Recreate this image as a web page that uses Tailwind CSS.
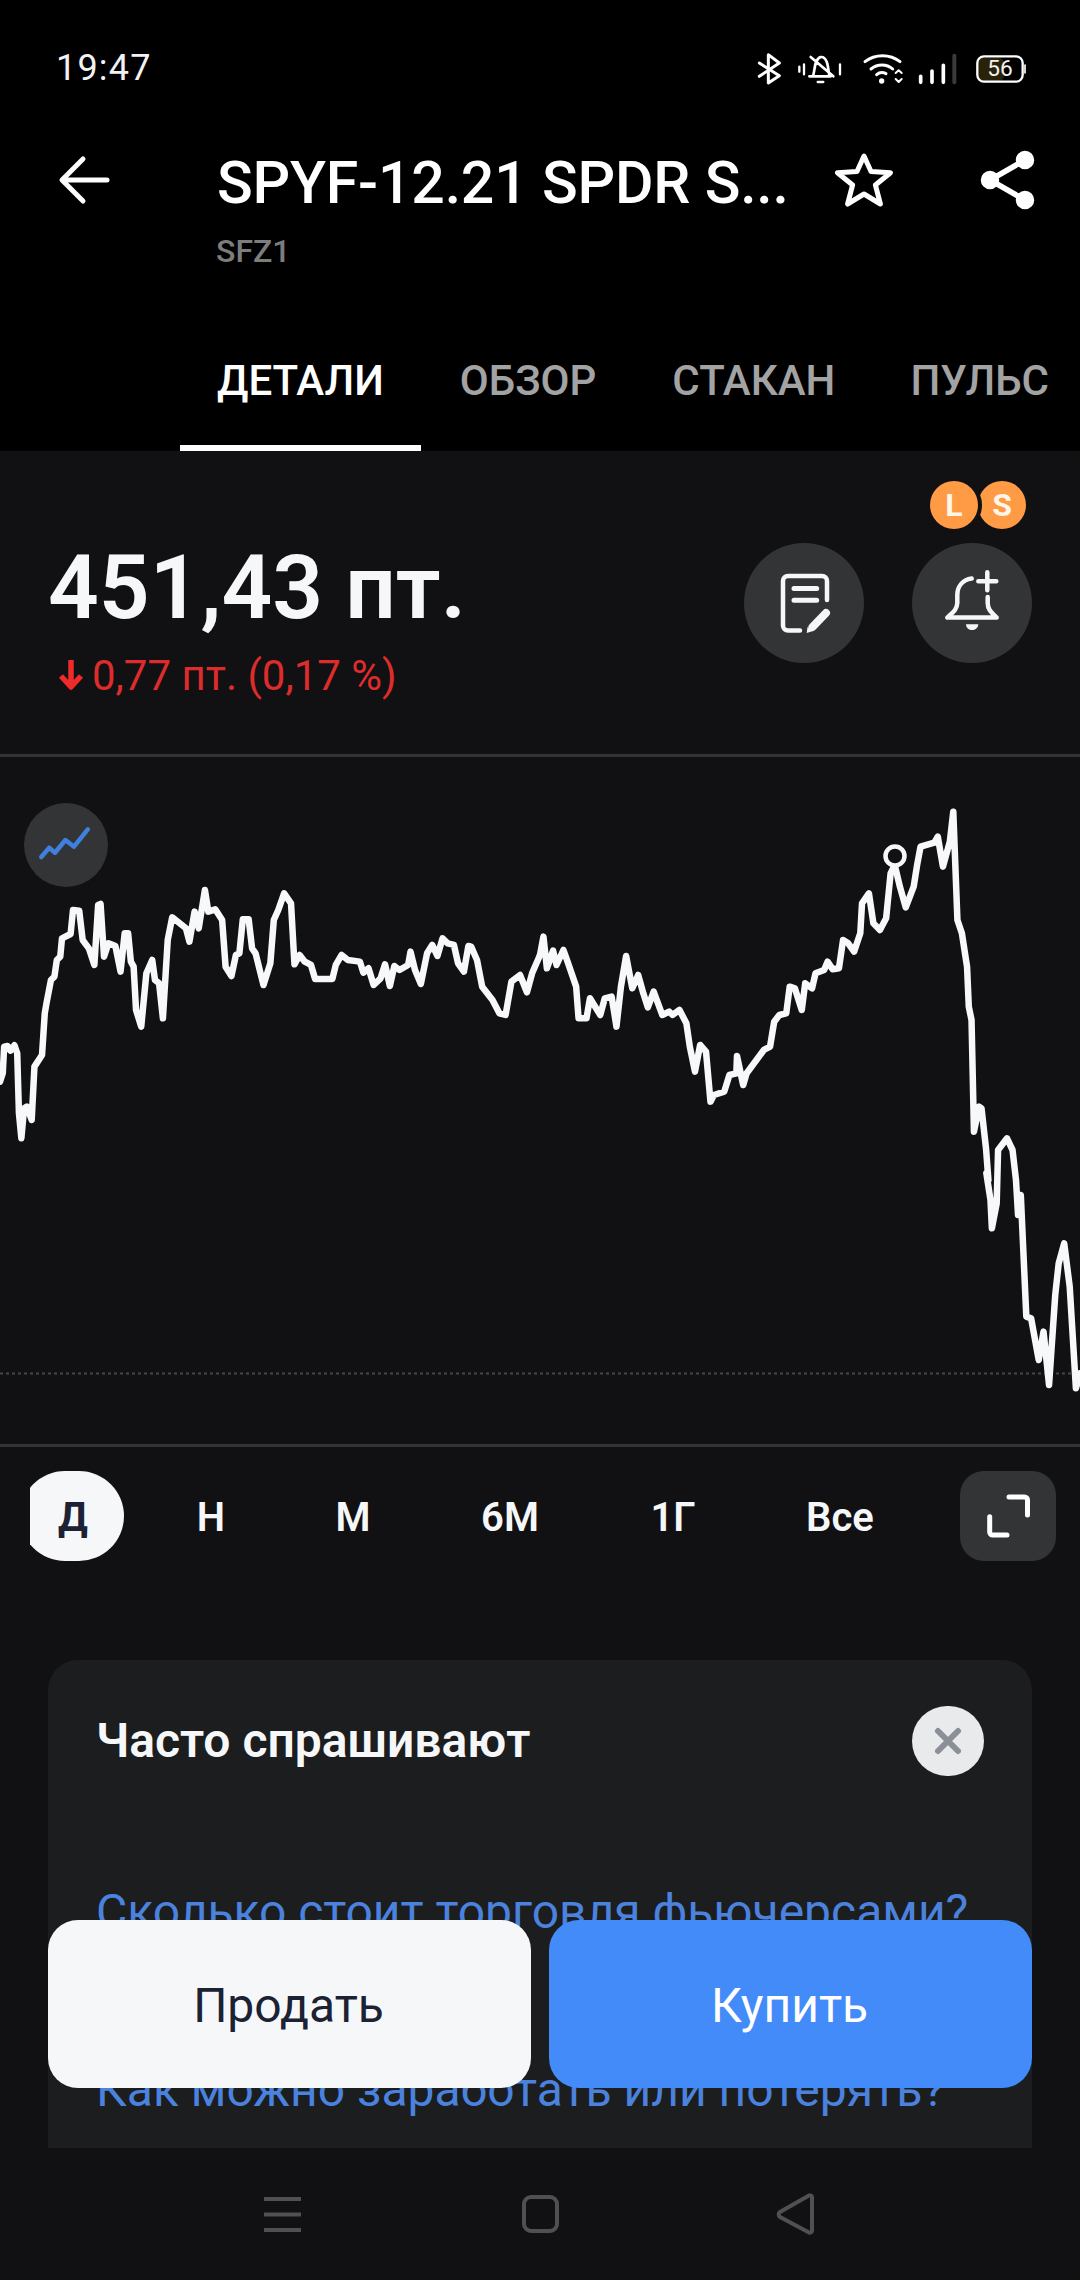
<!DOCTYPE html>
<html lang="ru">
<head>
<meta charset="utf-8">
<script src="https://cdn.jsdelivr.net/npm/@tailwindcss/browser@4"></script>
</head>
<body>
<div class="relative w-[1080px] h-[2280px] overflow-hidden bg-[#111113] font-[Roboto,sans-serif] text-white flex flex-col">

  <!-- header -->
  <header class="bg-black h-[451px] flex flex-col shrink-0">
    <div class="h-[136px] flex items-center justify-between pl-[56px] pr-[54px]">
      <span class="text-[36px] leading-[44px] tracking-[1.2px] text-[#f2f2f2]">19:47</span>
      <svg class="mr-[-54px]" width="380" height="70" viewBox="0 0 1140 210" fill="none" stroke="#fff" stroke-linecap="round" stroke-linejoin="round">
        <path d="M178 90L238 128L205 150V65L238 90L178 130" stroke-width="9"/>
        <path d="M298 101V116M312 94V124M420 94V124" stroke-width="7"/>
        <path d="M328 130H392M338 130C346 118 340 80 362 72C382 70 384 100 388 130M332 72L400 130" stroke-width="8"/>
        <path d="M353 147H370" stroke-width="7"/>
        <path d="M495 86C525 62 570 62 600 86M513 108C532 92 560 92 578 108M530 125C538 118 550 118 558 122" stroke-width="9"/>
        <circle cx="545" cy="144" r="8" fill="#fff" stroke="none"/>
        <path d="M587 120L596 112L605 120M587 138L596 147L605 138" stroke-width="6"/>
        <path d="M662 130V148M696 114V148M730 97V148" stroke-width="11"/>
        <path d="M763 68V148" stroke-width="12" stroke="#3a3a3a"/>
        <rect x="836" y="74" width="76" height="70" rx="16" fill="#2a2208" stroke="none"/>
        <rect x="832" y="70" width="136" height="76" rx="20" stroke-width="7"/>
        <path d="M975 96V120" stroke-width="5"/>
        <text x="900" y="130" text-anchor="middle" font-family="Roboto" font-size="68" fill="#f2f2f2" stroke="none">56</text>
      </svg>
    </div>
    <div class="h-[88px] flex items-center pl-[58px]">
      <svg width="54" height="52" viewBox="58 154 54 52" fill="none" stroke="#fff" stroke-width="5" stroke-linecap="round" stroke-linejoin="round"><path d="M107 180H63M83 159L62 180L83 201"/></svg>
      <h1 class="ml-[105px] mt-[6px] w-[617px] text-[59px] leading-[70px] font-medium tracking-[-0.2px] whitespace-nowrap">SPYF-12.21 SPDR S...</h1>
      <svg width="60" height="60" viewBox="834 150 60 60" fill="none" stroke="#fff" stroke-width="5" stroke-linejoin="round"><polygon points="864,156 871,171.5 890.5,172.7 875.4,185 880.4,204 864,194 847.6,204 852.6,185 837.5,172.7 857,171.5"/></svg>
      <svg class="ml-[84px]" width="60" height="64" viewBox="978 148 60 64" fill="#fff" stroke="#fff" stroke-width="5.5"><path d="M1025 160L990 180L1025 200" fill="none"/><circle cx="1025" cy="160" r="6.5"/><circle cx="990" cy="180" r="6.5"/><circle cx="1025" cy="200" r="6.5"/></svg>
    </div>
    <div class="h-[36px] mt-[9px] pl-[216px] text-[32px] leading-[36px] font-medium text-[#7d7d7d]">SFZ1</div>
    <nav class="mt-auto h-[126px] flex pl-[180px] text-[42px] font-medium text-[#a3a3a3]">
      <span class="px-[37px] pt-[31px] leading-[50px] text-white border-b-[6px] border-white">ДЕТАЛИ</span>
      <span class="pl-[39px] pr-[38px] pt-[31px] leading-[50px]">ОБЗОР</span>
      <span class="pl-[38px] pr-[37px] pt-[31px] leading-[50px]">СТАКАН</span>
      <span class="pl-[38px] pt-[31px] leading-[50px]">ПУЛЬС</span>
    </nav>
  </header>

  <!-- price -->
  <section class="h-[306px] shrink-0 border-b-[3px] border-[#333436] flex justify-between pt-[87px] pl-[48px] pr-[48px]">
    <div>
      <div class="text-[89px] leading-[100px] font-semibold text-[#f6f7f8]">451,43 пт.</div>
      <div class="flex items-center h-[50px] mt-[12px] text-[42px] text-[#dd2c2c] pl-[10px]">
        <svg width="26" height="32" viewBox="0 0 26 32" fill="none" stroke="#ee2a2a" stroke-width="5.5" stroke-linejoin="round"><path d="M13 1V28M3 17L13 28L23 17"/></svg>
        <span class="ml-[8px]">0,77 пт. (0,17 %)</span>
      </div>
    </div>
    <div class="flex gap-[48px] mt-[5px] h-[120px]">
      <div class="w-[120px] h-[120px] rounded-full bg-[#333436]">
        <svg width="120" height="120" viewBox="0 0 120 120" fill="none" stroke="#f6f7f8" stroke-width="4.5" stroke-linecap="round" stroke-linejoin="round">
          <path d="M56 87.5H44a5 5 0 0 1-5-5V38a5 5 0 0 1 5-5H78a5 5 0 0 1 5 5V57"/>
          <path d="M50 45.6H72.7M50 57.3H72.7" stroke-width="5"/>
          <path d="M82 70L68.5 84" stroke-width="8" stroke-linecap="round"/>
          <polygon points="62.7,90 63.5,84 69,88" fill="#f6f7f8" stroke="none"/>
        </svg>
      </div>
      <div class="relative w-[120px] h-[120px] rounded-full bg-[#333436]">
        <svg width="120" height="120" viewBox="0 0 120 120" fill="none" stroke="#f6f7f8" stroke-width="4.5" stroke-linecap="round" stroke-linejoin="round">
          <path d="M59.7 35.6C50 37 45.3 44 45.3 52.3V60C45 67 40 70 35.3 74.6H84.7C80 70 75.7 67 75.7 60V54"/>
          <path d="M75.3 29.3V47.3M66.3 38.3H84.3"/>
          <path d="M54 81.3H66.3C66 89 54 89 54 81.3Z" fill="#f6f7f8" stroke="none"/>
        </svg>
        <div class="absolute left-[18px] top-[-62px] flex">
          <span class="relative z-10 w-[48px] h-[48px] rounded-full bg-[#ff9a45] ring-4 ring-[#111113] flex items-center justify-center text-[32px] font-bold text-[#fff6ea]">L</span>
          <span class="w-[48px] h-[48px] rounded-full bg-[#ff9a45] flex items-center justify-center text-[32px] font-bold text-[#fff6ea]">S</span>
        </div>
      </div>
    </div>
  </section>

  <!-- chart -->
  <section class="relative h-[690px] shrink-0 border-b-[3px] border-[#333436]">
    <svg class="absolute inset-0" width="1080" height="687" viewBox="0 757 1080 687" fill="none">
      <path d="M0 1373.5H1080" stroke="#454648" stroke-width="2" stroke-dasharray="3 3"/>
      <g stroke="#f6f8fa" stroke-width="6.5" stroke-linejoin="round" stroke-linecap="round">
        <polyline vector-effect="non-scaling-stroke" transform="translate(0,780) scale(0.3444,0.3333)" points="0,905 8,880 12,800 22,798 30,812 42,796 50,820 55,1000 62,1075 70,985 78,980 92,1020 100,860 122,825 130,700 135,670 148,600 158,590 165,540 175,530 180,475 205,462 212,390 230,392 240,480 258,505 274,555 285,375 292,372 302,530 315,490 335,498 350,575 362,460 372,460 380,545 388,560 395,690 410,740 425,580 442,540 450,600 462,610 473,715 487,480 500,412 540,445 550,485 565,395 577,445 595,330 605,395 625,388 645,420 655,560 672,588 685,525 695,520 705,418 722,418 732,505 742,520 765,615 785,550 795,420 808,390 825,340 845,370 855,553 870,525 885,545 903,555 915,597 965,597 975,555 992,525 1010,540 1045,545 1055,578 1070,565 1085,615 1105,595 1118,553 1132,618 1145,558 1160,570 1185,555 1192,515 1205,570 1222,612 1240,520 1255,495 1270,528 1285,475 1300,490 1318,495 1330,550 1347,575 1360,498 1368,500 1385,540 1400,620 1430,660 1450,700 1468,705 1485,605 1510,585 1530,637 1545,580 1568,525"/>
        <polyline vector-effect="non-scaling-stroke" transform="translate(540,780) scale(0.3444,0.3333)" points="0,525 10,470 20,565 38,512 48,555 68,510 80,545 95,590 105,620 112,715 135,715 145,655 175,705 188,655 208,650 222,740 235,620 250,528 268,625 285,585 300,640 313,682 330,635 355,705 375,695 385,705 405,690 425,730 435,800 450,875 465,795 482,815 495,965 505,945 535,935 550,885 570,880 572,828 590,915 600,880 650,810 668,800 680,725 695,705 715,700 725,620 740,625 760,690 770,610 790,625 800,580 825,570 835,545 850,568 868,565 880,480 895,490 912,515 930,460 935,370 955,340 968,430 987,450 1005,415 1018,280 1030,255 1045,320 1062,382 1085,320 1095,255 1105,200 1145,188 1155,170 1170,260 1190,185 1200,95 1212,420 1225,460 1240,560 1245,680 1253,720 1260,1055 1275,980 1282,985 1295,1105 1302,1200"/>
        <polyline vector-effect="non-scaling-stroke" transform="translate(0,1180) scale(0.6888,0.3333)" points="1432,-20 1438,60 1440,145 1447,70 1449,-90 1462,-125 1470,-90 1475,0 1478,105 1482,45 1490,410 1497,415 1508,540 1515,455 1523,615 1532,345 1537,250 1545,190 1553,320 1562,625 1568,580"/>
      </g>
      <circle cx="895" cy="856" r="9.5" fill="#111113" stroke="#f6f8fa" stroke-width="4.5"/>
    </svg>
    <div class="absolute left-[24px] top-[46px] w-[84px] h-[84px] rounded-full bg-[#333436]">
      <svg width="84" height="84" viewBox="0 0 84 84" fill="none" stroke="#3f7fdd" stroke-width="4.5" stroke-linecap="round" stroke-linejoin="round"><polyline points="17.3,54 25.2,44.7 31,49.7 41.4,37 50,43.7 63.8,26.3"/></svg>
    </div>
  </section>

  <!-- periods -->
  <div class="h-[113px] shrink-0 pt-[24px] pl-[30px] flex text-[40px] font-semibold text-[#f6f7f8] leading-[94px] text-center">
    <div class="w-[94px] h-[90px] overflow-hidden">
      <div class="ml-[-10px] w-[104px] h-[90px] rounded-full bg-[#f6f7f9] text-[#1a2233] font-bold pl-[2px]">Д</div>
    </div>
    <span class="w-[174px]">Н</span>
    <span class="w-[110px]">М</span>
    <span class="w-[204px]">6М</span>
    <span class="w-[122px]">1Г</span>
    <span class="w-[212px]">Все</span>
    <div class="ml-[14px] w-[96px] h-[90px] rounded-[24px] bg-[#333436]">
      <svg width="96" height="90" viewBox="0 0 96 90" fill="none" stroke="#fff" stroke-width="5" stroke-linecap="round" stroke-linejoin="round"><path d="M49 26H64.5a3 3 0 0 1 3 3V44M29.7 45.7V61a3 3 0 0 0 3 3H47"/></svg>
    </div>
  </div>

  <!-- card -->
  <section class="mx-[48px] mt-[100px] h-[488px] shrink-0 rounded-t-[30px] bg-[#1c1d1f] pt-[46px] pl-[48px] pr-[48px] overflow-hidden">
    <div class="flex items-center justify-between h-[70px]">
      <h2 class="text-[48px] leading-[60px] font-semibold text-[#f6f7f8]">Часто спрашивают</h2>
      <div class="w-[72px] h-[70px] rounded-full bg-[#e8eaec] flex items-center justify-center">
        <svg width="32" height="32" viewBox="0 0 32 32" fill="none" stroke="#8b9098" stroke-width="6" stroke-linecap="round"><path d="M6 6L26 26M26 6L6 26"/></svg>
      </div>
    </div>
    <p class="mt-[106px] text-[48px] leading-[60px] text-[#4a82dd] whitespace-nowrap">Сколько стоит торговля фьючерсами?</p>
    <p class="mt-[118px] text-[48px] leading-[60px] text-[#4a82dd] whitespace-nowrap">Как можно заработать или потерять?</p>
  </section>

  <!-- system nav -->
  <div class="h-[132px] shrink-0 bg-[#111113]">
    <svg width="1080" height="132" viewBox="0 2148 1080 132" fill="none" stroke="#4f5052" stroke-width="4" stroke-linejoin="round">
      <path d="M264 2199H301M264 2214.5H301M264 2230H301"/>
      <rect x="524" y="2197" width="33" height="34" rx="7"/>
      <path d="M812 2197V2231a2 2 0 0 1-3 1.5L780 2217a3 3 0 0 1 0-5L809 2195.5a2 2 0 0 1 3 1.5Z"/>
    </svg>
  </div>

  <!-- action buttons -->
  <div class="absolute left-[48px] top-[1920px] w-[984px] flex gap-[18px] text-[48px]">
    <button class="flex-1 h-[168px] pt-[3px] pr-[2px] rounded-[30px] bg-[#f6f7f9] text-[#1a2233]">Продать</button>
    <button class="flex-1 h-[168px] pt-[3px] pr-[2px] rounded-[30px] bg-[#428bf9] text-white">Купить</button>
  </div>
</div>
</body>
</html>
